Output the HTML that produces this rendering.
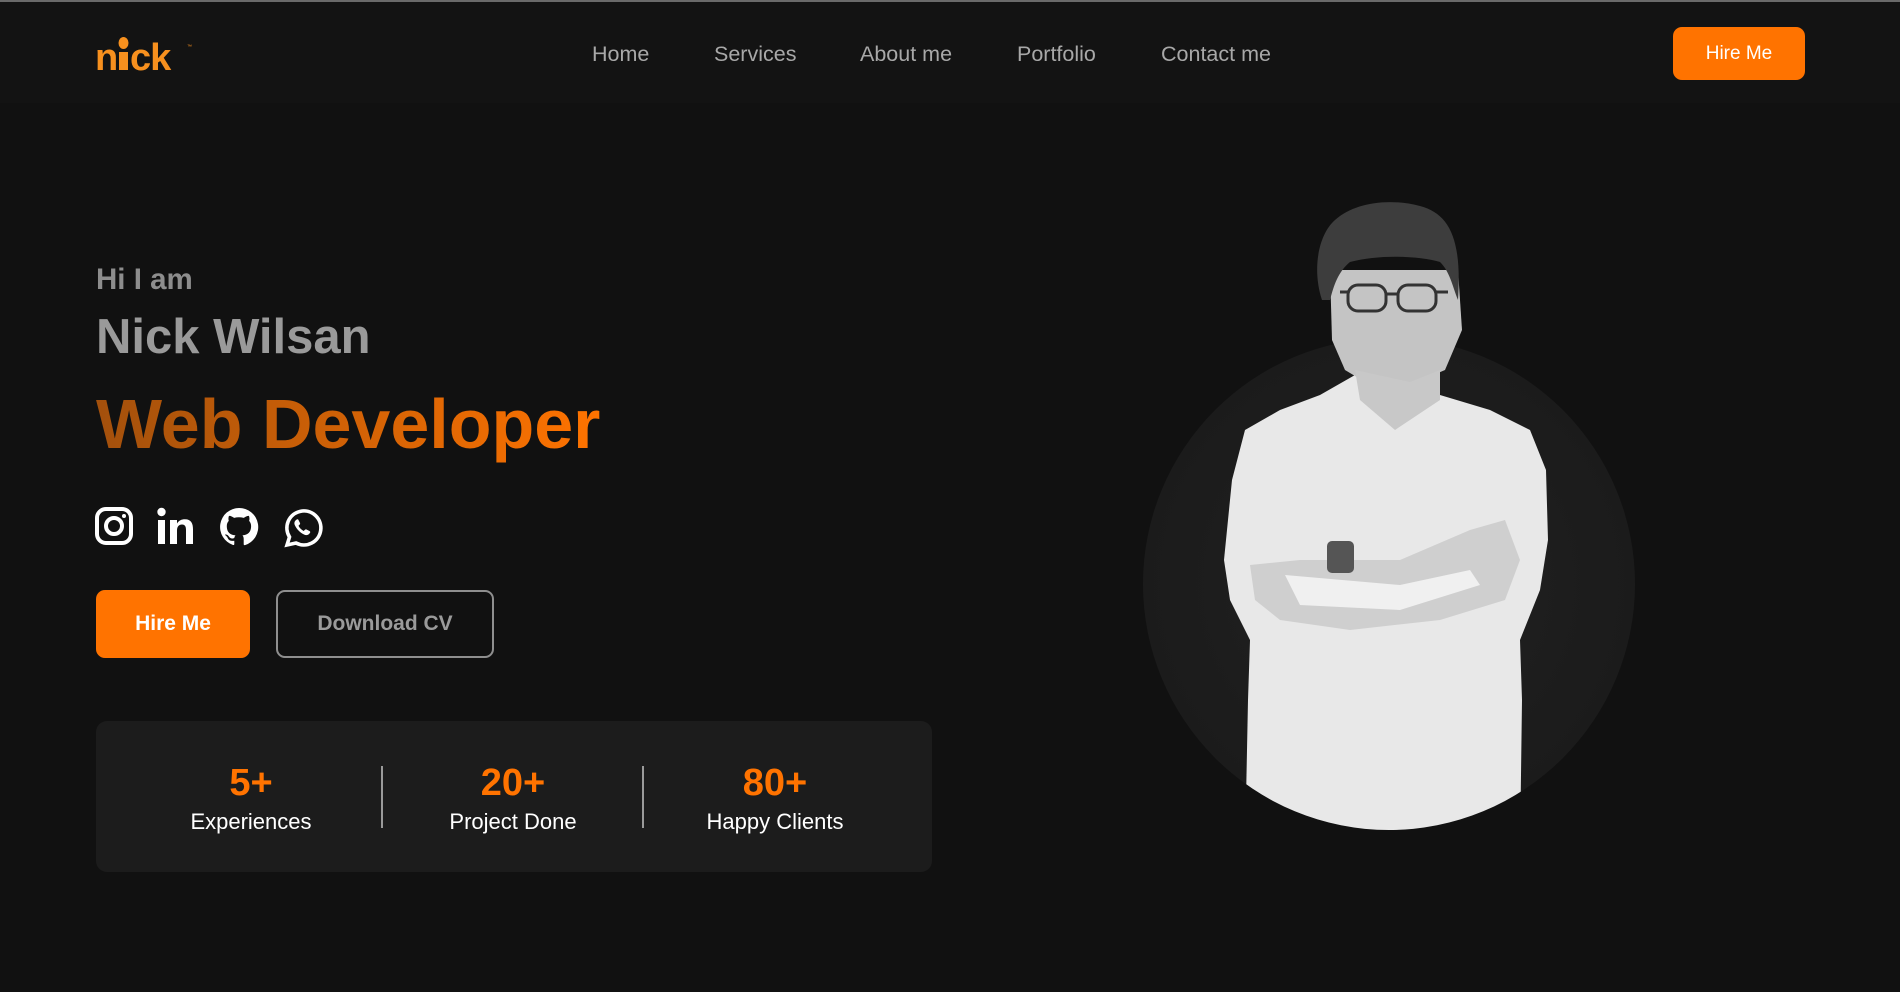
<!DOCTYPE html>
<html><head><meta charset="utf-8"><style>
*{margin:0;padding:0;box-sizing:border-box}
body{width:1900px;height:992px;background:#111111;font-family:"Liberation Sans",Arial,sans-serif;position:relative;overflow:hidden}
.top{position:absolute;left:0;top:0;width:1900px;height:2px;background:#6a6a6a}
.nav{position:absolute;left:0;top:2px;width:1900px;height:101px;background:#131313}
.logo{position:absolute;left:95px;top:30px;font-weight:bold;font-size:40px;color:#f7901e;letter-spacing:-1px;font-family:"Liberation Sans",sans-serif;transform:scaleY(1.05)}
.links a{position:absolute;top:40px;font-size:21.5px;color:#a8a8a8;text-decoration:none}
.btn{position:absolute;background:#ff7300;color:#fff;font-weight:bold;border-radius:9px;display:flex;align-items:center;justify-content:center}
.t{position:absolute;left:96px;font-weight:bold;white-space:nowrap}
.stats{position:absolute;left:96px;top:721px;width:836px;height:151px;background:#1c1c1c;border-radius:11px}
.col{position:absolute;top:40px;width:240px;text-align:center}
.col b{display:block;color:#ff7300;font-size:38px;line-height:44px}
.col span{display:block;color:#fff;font-size:22px;margin-top:4px}
.div{position:absolute;top:45px;width:2px;height:62px;background:#9a9a9a}
</style></head><body>
<div class="top"></div>
<div class="nav">
<svg style="position:absolute;left:95px;top:32px" width="100" height="40" viewBox="0 0 100 40">
<text x="0" y="36" font-family="Liberation Sans" font-weight="bold" font-size="38" fill="#f7901e">n</text>
<rect x="24" y="18" width="9" height="18" fill="#f7901e"/><ellipse cx="28.5" cy="9" rx="5" ry="6" fill="#f7901e"/>
<text x="35" y="36" font-family="Liberation Sans" font-weight="bold" font-size="38" fill="#f7901e" letter-spacing="-1">ck</text>
<text x="92" y="14" font-family="Liberation Sans" font-size="5" fill="#f7901e">™</text>
</svg>
<div class="links"><a style="left:592px">Home</a><a style="left:714px">Services</a><a style="left:860px">About me</a><a style="left:1017px">Portfolio</a><a style="left:1161px">Contact me</a></div>
</div>
<div class="btn" style="left:1673px;top:27px;width:132px;height:53px;font-size:19px;font-weight:normal">Hire Me</div>

<div class="t" style="top:263px;font-size:29.5px;color:#8d8d8d">Hi I am</div>
<div class="t" style="top:309px;font-size:49px;color:#9a9a9a">Nick Wilsan</div>
<div class="t" style="top:384px;font-size:70px;background:linear-gradient(90deg,#a3500c,#ff7300);-webkit-background-clip:text;background-clip:text;color:transparent">Web Developer</div>

<svg style="position:absolute;left:94px;top:506px" width="240" height="44" viewBox="0 0 240 44" fill="none" stroke="#fff">
<rect x="3" y="3" width="34" height="34" rx="9" stroke-width="4"/><circle cx="20" cy="20" r="8" stroke-width="4"/><circle cx="30" cy="10" r="2" fill="#fff" stroke="none"/>
<g fill="#fff" stroke="none"><rect x="64" y="14" width="7" height="24"/><circle cx="67.5" cy="6" r="4.2"/><path d="M76 14h7v3.5c2-3 4.5-4.2 8-4.2c6 0 8 4 8 10V38h-7V24c0-3.5-1-5.5-4-5.5s-5 2-5 6V38h-7z"/></g>
<path fill="#fff" stroke="none" d="M145 2a19 19 0 0 0-6 37c1 .2 1.3-.4 1.3-1v-3.3c-5.3 1.1-6.4-2.3-6.4-2.3c-.9-2.2-2.1-2.8-2.1-2.8c-1.7-1.200.1-1.100.1-1.100c1.900.1 2.900 1.900 2.900 1.900c1.700 2.900 4.400 2.100 5.500 1.600c.2-1.200.7-2.100 1.200-2.600c-4.200-.5-8.700-2.100-8.700-9.400c0-2.100.7-3.800 2-5.100c-.2-.5-.8-2.400.2-5c0 0 1.600-.5 5.200 2a18 18 0 0 1 9.500 0c3.600-2.500 5.200-2 5.200-2c1 2.600.4 4.500.2 5c1.200 1.300 2 3 2 5.100c0 7.300-4.500 8.900-8.700 9.400c.7.6 1.300 1.800 1.300 3.500v5.200c0 .6.3 1.200 1.300 1A19 19 0 0 0 145 2z"/>
<path stroke-width="3.6" d="M193 39l2.500-8a17 17 0 1 1 6.500 6z"/>
<path fill="#fff" stroke="none" d="M202 14c1-1 2-1 2.500 0l1.500 3c.3.7 0 1.300-.5 1.800l-1 1c1 2.200 3 4.200 5.200 5.200l1-1c.5-.5 1.100-.8 1.800-.5l3 1.500c1 .5 1 1.500 0 2.500c-1.500 1.800-3.500 2-5.500 1c-4-2-7-5-9-9c-1-2-.8-4 1-5.500z"/>
</svg>

<div class="btn" style="left:96px;top:590px;width:154px;height:68px;font-size:21px">Hire Me</div>
<div style="position:absolute;left:276px;top:590px;width:218px;height:68px;border:2px solid #8f8f8f;border-radius:9px;color:#9a9a9a;font-weight:bold;font-size:21px;display:flex;align-items:center;justify-content:center">Download CV</div>

<div class="stats">
<div class="col" style="left:35px"><b>5+</b><span>Experiences</span></div>
<div class="div" style="left:285px"></div>
<div class="col" style="left:297px"><b>20+</b><span>Project Done</span></div>
<div class="div" style="left:546px"></div>
<div class="col" style="left:559px"><b>80+</b><span>Happy Clients</span></div>
</div>

<svg style="position:absolute;left:0;top:0" width="1900" height="992">
<defs><clipPath id="c"><rect x="1100" y="150" width="600" height="434"/><circle cx="1389" cy="584" r="246"/></clipPath>
<radialGradient id="g" cx="50%" cy="50%" r="50%"><stop offset="0" stop-color="#222"/><stop offset="1" stop-color="#1b1b1b"/></radialGradient></defs>
<circle cx="1389" cy="584" r="246" fill="url(#g)"/>
<g clip-path="url(#c)">
<path fill="#e8e8e8" d="M1355 375 L1380 370 L1405 378 L1440 395 L1490 410 L1530 430 L1546 470 L1548 540 L1540 590 L1520 640 L1522 700 L1520 850 L1245 850 L1248 700 L1250 640 L1230 600 L1224 560 L1232 480 L1245 430 L1280 410 L1320 395z"/>
<path fill="#cfcfcf" d="M1250 565 L1300 560 L1400 560 L1470 530 L1505 520 L1520 560 L1505 600 L1440 620 L1350 630 L1280 620 L1255 600z"/>
<path fill="#f0f0f0" d="M1285 575 L1400 585 L1470 570 L1480 585 L1400 610 L1300 605z"/>
<rect x="1327" y="541" width="27" height="32" rx="5" fill="#555"/>
<path fill="#c4c4c4" d="M1330 270 L1458 270 L1462 330 L1445 370 L1410 385 L1370 385 L1345 370 L1332 340z"/>
<path fill="#c8c8c8" d="M1355 370 L1410 382 L1440 370 L1440 400 L1395 430 L1360 400z"/>
<path fill="#3d3d3d" d="M1322 300 C1312 270 1318 235 1335 220 C1355 202 1390 198 1420 206 C1450 214 1462 240 1458 300 C1452 285 1450 272 1440 262 C1420 256 1380 254 1350 262 C1338 272 1334 285 1330 300z"/>
<g fill="none" stroke="#333" stroke-width="3"><rect x="1348" y="285" width="38" height="26" rx="10"/><rect x="1398" y="285" width="38" height="26" rx="10"/><path d="M1386 294h12M1340 292h8M1436 292h12"/></g>
</g>
</svg>
</body></html>
